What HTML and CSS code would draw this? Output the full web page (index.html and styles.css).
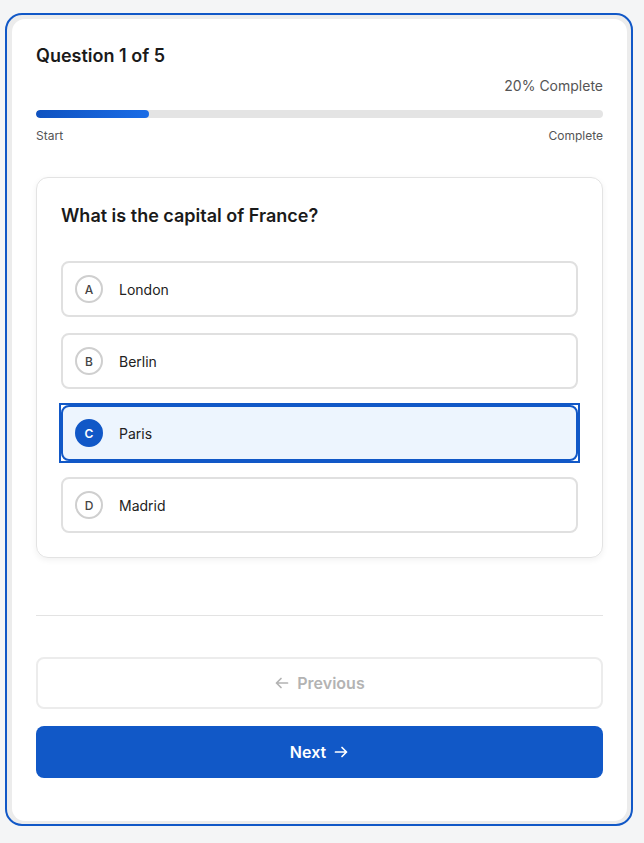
FILE: index.html
```html
<!DOCTYPE html>
<html lang="en">
<head>
<meta charset="utf-8">
<title>Quiz</title>
<link rel="stylesheet" href="styles.css">
</head>
<body>
<div class="frame">
  <div class="card">
    <h1 class="title">Question 1 of 5</h1>
    <div class="percent">20% Complete</div>
    <div class="track"><div class="fill" style="width:20%"></div></div>
    <div class="ends"><span>Start</span><span>Complete</span></div>

    <section class="qcard">
      <h2 class="question">What is the capital of France?</h2>
      <div class="options">
        <div class="option"><span class="letter">A</span><span class="label">London</span></div>
        <div class="option"><span class="letter">B</span><span class="label">Berlin</span></div>
        <div class="option selected"><span class="letter">C</span><span class="label">Paris</span></div>
        <div class="option"><span class="letter">D</span><span class="label">Madrid</span></div>
      </div>
    </section>

    <hr class="divider">

    <div class="actions">
      <button class="btn prev" disabled>
        <svg width="16" height="16" viewBox="0 0 16 16" fill="none" stroke="currentColor" stroke-width="1.7" stroke-linecap="round" stroke-linejoin="round"><path d="M13.5 8h-11M7 3.5L2.5 8 7 12.5"/></svg>
        Previous
      </button>
      <button class="btn next">
        Next
        <svg width="16" height="16" viewBox="0 0 16 16" fill="none" stroke="currentColor" stroke-width="1.7" stroke-linecap="round" stroke-linejoin="round"><path d="M2.5 8h11M9 3.5L13.5 8 9 12.5"/></svg>
      </button>
    </div>
  </div>
</div>
</body>
</html>
```

FILE: styles.css
```css
* { box-sizing: border-box; }
html, body { margin: 0; padding: 0; }
body {
  background: #f4f5f6;
  font-family: Inter, "Liberation Sans", sans-serif;
  color: #1a1a1a;
  padding: 13px 11px 17px 5px;
}
.frame {
  border: 2px solid #1158c7;
  border-radius: 17px;
  padding: 4px 4px 3px 5px;
  background: #ececec;
  width: 628px;
}
.card {
  background: #fff;
  border-radius: 13px;
  padding: 25px 24px 44px 24px;
  height: 802px;
}
.title {
  margin: 0;
  font-size: 18px;
  line-height: 24px;
  font-weight: 600;
  color: #1a1a1a;
}
.percent {
  margin-top: 8px;
  text-align: right;
  font-size: 14px;
  line-height: 20px;
  color: #555;
}
.track {
  margin-top: 14px;
  height: 8px;
  border-radius: 4px;
  background: #e4e4e4;
  overflow: hidden;
}
.fill {
  height: 100%;
  border-radius: 4px;
  background: linear-gradient(90deg, #0f52c0, #1a6ce6);
}
.ends {
  margin-top: 10px;
  display: flex;
  justify-content: space-between;
  font-size: 12px;
  line-height: 16px;
  color: #555;
}
.qcard {
  margin-top: 33px;
  border: 1px solid #e3e3e3;
  border-radius: 12px;
  padding: 24px;
  box-shadow: 0 2px 6px rgba(0,0,0,0.06);
}
.question {
  margin: 0 0 33px;
  padding-top: 2px;
  font-size: 18px;
  line-height: 24px;
  font-weight: 600;
  color: #1a1a1a;
}
.options {
  display: flex;
  flex-direction: column;
  gap: 16px;
}
.option {
  position: relative;
  display: flex;
  align-items: center;
  gap: 16px;
  height: 56px;
  padding: 0 12px;
  border: 2px solid #e0e0e0;
  border-radius: 8px;
  background: #fff;
  font-size: 14px;
  color: #222;
}
.letter {
  width: 28px;
  height: 28px;
  border-radius: 50%;
  border: 2px solid #cfcfcf;
  display: flex;
  align-items: center;
  justify-content: center;
  font-size: 12px;
  font-weight: 500;
  color: #444;
  flex: none;
}
.option.selected {
  border-color: #1158c7;
  background: #edf5fe;
}
.option.selected::after {
  content: "";
  position: absolute;
  inset: -4px;
  border: 2px solid #1158c7;
  pointer-events: none;
}
.option.selected .letter {
  background: #1158c7;
  border-color: #1158c7;
  color: #fff;
  font-weight: 600;
}
.divider {
  margin: 57px 0 0;
  border: 0;
  border-top: 1px solid #e3e3e3;
}
.actions {
  margin-top: 41px;
  display: flex;
  flex-direction: column;
  gap: 17px;
}
.btn {
  height: 52px;
  border-radius: 8px;
  font-family: inherit;
  font-size: 16px;
  font-weight: 600;
  display: flex;
  align-items: center;
  justify-content: center;
  gap: 7px;
}
.prev {
  background: #fff;
  border: 2px solid #ececec;
  color: #b3b3b3;
}
.next {
  background: #1158c7;
  border: 0;
  color: #fff;
}
```
